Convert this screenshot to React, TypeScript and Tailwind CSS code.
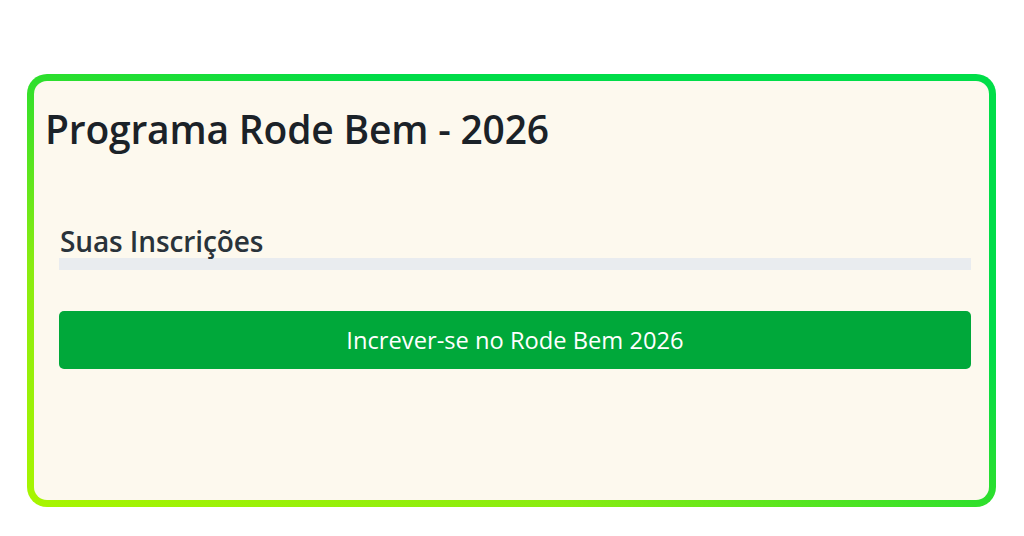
import React from "react";

export default function App() {
  return (
    <div className="w-[1024px] h-[536px] bg-white pt-[74px] pl-[27px] pr-[28px]" style={{ fontFamily: '"Open Sans", "Noto Sans", sans-serif' }}>
      <div className="h-[433px] rounded-[20px] p-[7px] bg-[linear-gradient(to_top_right,#a8f500_0%,#8aec10_28%,#2edf2c_50%,#00dc48_68%,#00de48_100%)]">
        <div className="h-full rounded-[13px] bg-[#fdf9ee] pl-[11px] pt-[25px]">
          <h1 className="text-[39px] leading-[1.2] font-semibold text-[#1b2228] tracking-[-0.2px]">Programa Rode Bem - 2026</h1>
          <div className="pl-[14px] pr-[18px] mt-[72px]">
            <h3 className="text-[28px] leading-[1.2] font-semibold text-[#2a333a] pl-[1px] tracking-[-0.1px]">Suas Inscrições</h3>
            <div className="h-[12px] bg-[#e9ecef]" />
            <button className="mt-[41px] w-full h-[58px] rounded-[5px] bg-[#00a83a] text-white text-[23.7px] text-center">
              Increver-se no Rode Bem 2026
            </button>
          </div>
        </div>
      </div>
    </div>
  );
}
